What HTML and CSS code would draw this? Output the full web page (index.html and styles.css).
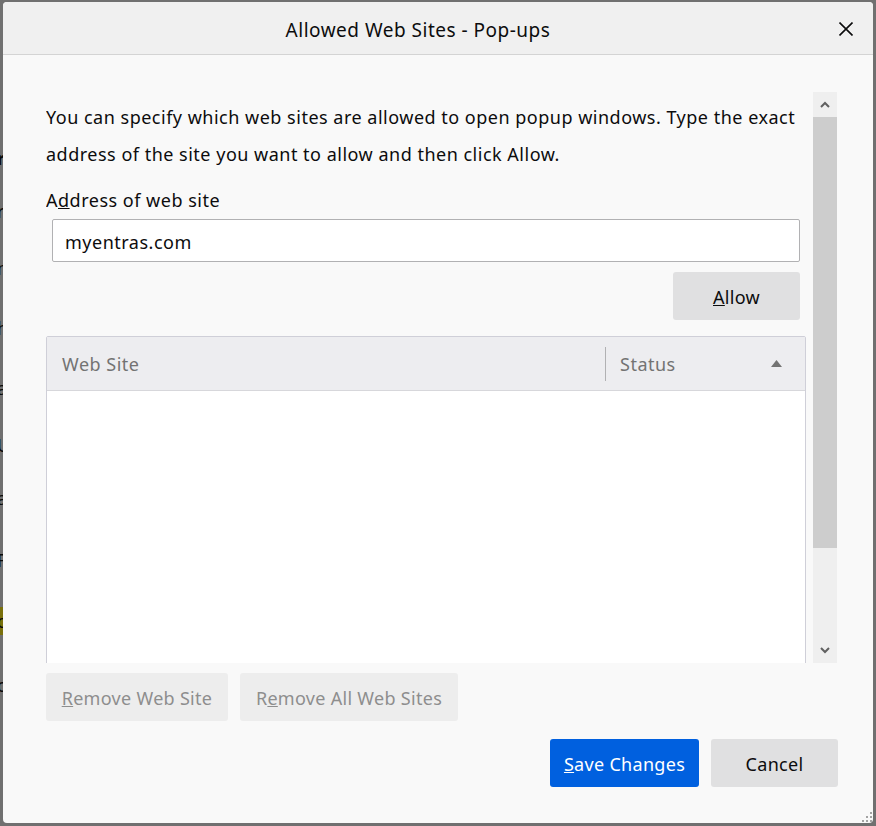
FILE: index.html
```html
<!DOCTYPE html>
<html lang="en">
<head>
<meta charset="utf-8">
<title>Allowed Web Sites - Pop-ups</title>
<link rel="stylesheet" href="styles.css">
</head>
<body>
<div class="page">
  <div class="behind">
    <div class="frag f1"><span class="bold">r</span></div>
    <div class="frag f2"><span>r</span></div>
    <div class="frag f3"><span>n</span></div>
    <div class="frag f4"><span>h</span></div>
    <div class="frag f5"><span>a</span></div>
    <div class="frag f6"><span>U</span></div>
    <div class="frag f7"><span>a</span></div>
    <div class="frag f8"><span>F</span></div>
    <div class="frag f9 hl"><span>o</span></div>
    <div class="frag f10"><span>c</span></div>
  </div>
  <div class="dialog">
    <div class="titlebar">
      <span class="title">Allowed Web Sites - Pop-ups</span>
      <button class="close" aria-label="Close">
        <svg width="14" height="14" viewBox="0 0 14 14"><path d="M0.5 0.5 L13.5 13.5 M13.5 0.5 L0.5 13.5" stroke="#0c0c0d" stroke-width="1.6" fill="none"/></svg>
      </button>
    </div>
    <div class="body">
      <div class="scroller">
        <div class="content">
          <p class="intro">You can specify which web sites are allowed to open popup windows. Type the exact address of the site you want to allow and then click Allow.</p>
          <label class="label">A<u>d</u>dress of web site</label>
          <div class="input">myentras.com</div>
          <div class="allow-row"><button class="btn"><u>A</u>llow</button></div>
          <div class="table">
            <div class="thead">
              <div class="th th-site">Web Site</div>
              <div class="sep"></div>
              <div class="th th-status">Status
                <svg class="sort" width="11" height="7" viewBox="0 0 11 7"><path d="M5.5 0 L11 7 L0 7 Z" fill="#737373"/></svg>
              </div>
            </div>
            <div class="tbody"></div>
          </div>
        </div>
        <div class="scrollbar">
          <div class="sb-btn">
            <svg width="10" height="7" viewBox="0 0 10 7"><path d="M1 6 L5 2 L9 6" stroke="#606060" stroke-width="2" fill="none"/></svg>
          </div>
          <div class="sb-thumb"></div>
          <div class="sb-track"></div>
          <div class="sb-btn">
            <svg width="10" height="7" viewBox="0 0 10 7"><path d="M1 1 L5 5 L9 1" stroke="#606060" stroke-width="2" fill="none"/></svg>
          </div>
        </div>
      </div>
      <div class="remove-row">
        <button class="btn disabled w-remove"><u>R</u>emove Web Site</button>
        <button class="btn disabled w-remove-all">R<u>e</u>move All Web Sites</button>
      </div>
      <div class="action-row">
        <button class="btn primary w-save"><u>S</u>ave Changes</button>
        <button class="btn w-cancel">Cancel</button>
      </div>
    </div>
    <svg class="grip" width="12" height="12" viewBox="0 0 12 12">
      <rect x="9" y="1" width="2" height="2" fill="#a3a3a3"/>
      <rect x="5" y="5" width="2" height="2" fill="#a3a3a3"/>
      <rect x="9" y="5" width="2" height="2" fill="#a3a3a3"/>
      <rect x="1" y="9" width="2" height="2" fill="#a3a3a3"/>
      <rect x="5" y="9" width="2" height="2" fill="#a3a3a3"/>
      <rect x="9" y="9" width="2" height="2" fill="#a3a3a3"/>
    </svg>
  </div>
</div>
</body>
</html>
```
FILE: styles.css
```css
* { box-sizing: border-box; }

html, body {
  margin: 0;
  padding: 0;
  width: 876px;
  height: 826px;
  overflow: hidden;
  background: #707070;
  font-family: "Noto Sans", "Open Sans", sans-serif;
  color: #0c0c0d;
}

.page {
  display: flex;
  height: 826px;
}

/* page content visible behind the dim overlay */
.behind {
  width: 3px;
  flex: none;
  overflow: hidden;
  display: flex;
  flex-direction: column;
}

.frag {
  height: 20px;
  line-height: 20px;
  font-size: 18px;
  color: #0a0a0a;
  white-space: nowrap;
}
.frag span { display: inline-block; margin-left: -3px; }
.frag .bold { font-weight: 700; }
.frag.hl { background: #7a700c; height: 28px; line-height: 28px; }

.f1 { margin-top: 148px; }
.f2 { margin-top: 33px; }
.f3 { margin-top: 37px; }
.f4 { margin-top: 40px; }
.f5 { margin-top: 40px; }
.f6 { margin-top: 37px; }
.f7 { margin-top: 33px; }
.f8 { margin-top: 42px; }
.f9 { margin-top: 37px; }
.f10 { margin-top: 40px; }

.dialog {
  position: relative;
  margin-top: 2px;
  width: 870px;
  height: 821px;
  flex: none;
  background: #f9f9f9;
  border-radius: 4px;
  overflow: hidden;
  display: flex;
  flex-direction: column;
}

.titlebar {
  height: 53px;
  flex: none;
  background: #f0f0f0;
  border-bottom: 1px solid #d4d4d4;
  display: flex;
  align-items: center;
  padding: 0 14px 0 0;
}
.title {
  flex: 1;
  text-align: center;
  font-size: 19px;
  line-height: 24px;
  padding-top: 3px;
  letter-spacing: 0.5px;
}
.close {
  width: 26px;
  height: 14px;
  padding: 0;
  border: 0;
  background: none;
  display: flex;
  justify-content: center;
  margin-top: 1px;
}

.body {
  flex: 1;
  padding: 37px 35px 0 43px;
  display: flex;
  flex-direction: column;
}

.scroller {
  display: flex;
  gap: 7px;
  height: 571px;
  flex: none;
}

.content {
  width: 760px;
  flex: none;
  overflow: hidden;
  padding-top: 7px;
  font-size: 18px;
  letter-spacing: 0.5px;
}

.intro {
  margin: 0;
  line-height: 37px;
}

.label {
  display: block;
  margin-top: 14px;
  line-height: 26px;
}

.input {
  margin: 6px 6px 0;
  height: 43px;
  border: 1px solid #b1b1b3;
  border-radius: 2px;
  background: #fff;
  padding: 2px 0 0 12px;
  line-height: 41px;
}

.allow-row {
  display: flex;
  justify-content: flex-end;
  padding-right: 6px;
  margin-top: 10px;
}

.btn {
  height: 48px;
  border: 0;
  border-radius: 3px;
  background: #e0e0e1;
  color: #0c0c0d;
  font-family: inherit;
  font-size: 18px;
  letter-spacing: 0.3px;
  padding: 2px 8px 0;
  width: 127px;
}

.table {
  margin-top: 16px;
  border: 1px solid #cfcfd8;
  border-radius: 2px 2px 0 0;
  height: 420px;
  display: flex;
  flex-direction: column;
  background: #fff;
}

.thead {
  height: 54px;
  flex: none;
  background: #ededf0;
  border-bottom: 1px solid #d7d7db;
  display: flex;
  align-items: center;
  color: #737373;
}
.th { padding-top: 1px; }
.th-site {
  flex: 1;
  padding-left: 15px;
}
.sep {
  width: 1px;
  height: 34px;
  background: #b1b1b3;
}
.th-status {
  width: 199px;
  padding-left: 14px;
  padding-right: 23px;
  display: flex;
  align-items: center;
  justify-content: space-between;
}
.sort { margin-top: -2px; }

.tbody { flex: 1; }

.scrollbar {
  width: 24px;
  flex: none;
  display: flex;
  flex-direction: column;
  background: #efefef;
}
.sb-btn {
  height: 25px;
  display: flex;
  align-items: center;
  justify-content: center;
}
.sb-thumb {
  height: 431px;
  background: #cdcdcd;
}
.sb-track { flex: 1; }

.remove-row {
  display: flex;
  gap: 12px;
  margin-top: 10px;
}
.btn.disabled {
  background: #ededed;
  color: #8e8e8e;
}
.w-remove { width: 182px; }
.w-remove-all { width: 218px; }

.action-row {
  display: flex;
  justify-content: flex-end;
  gap: 12px;
  margin-top: 18px;
}
.btn.primary {
  background: #0060df;
  color: #fff;
}
.w-save { width: 149px; }
.w-cancel { width: 127px; }

.grip {
  position: absolute;
  right: 0;
  bottom: 0;
}
```
